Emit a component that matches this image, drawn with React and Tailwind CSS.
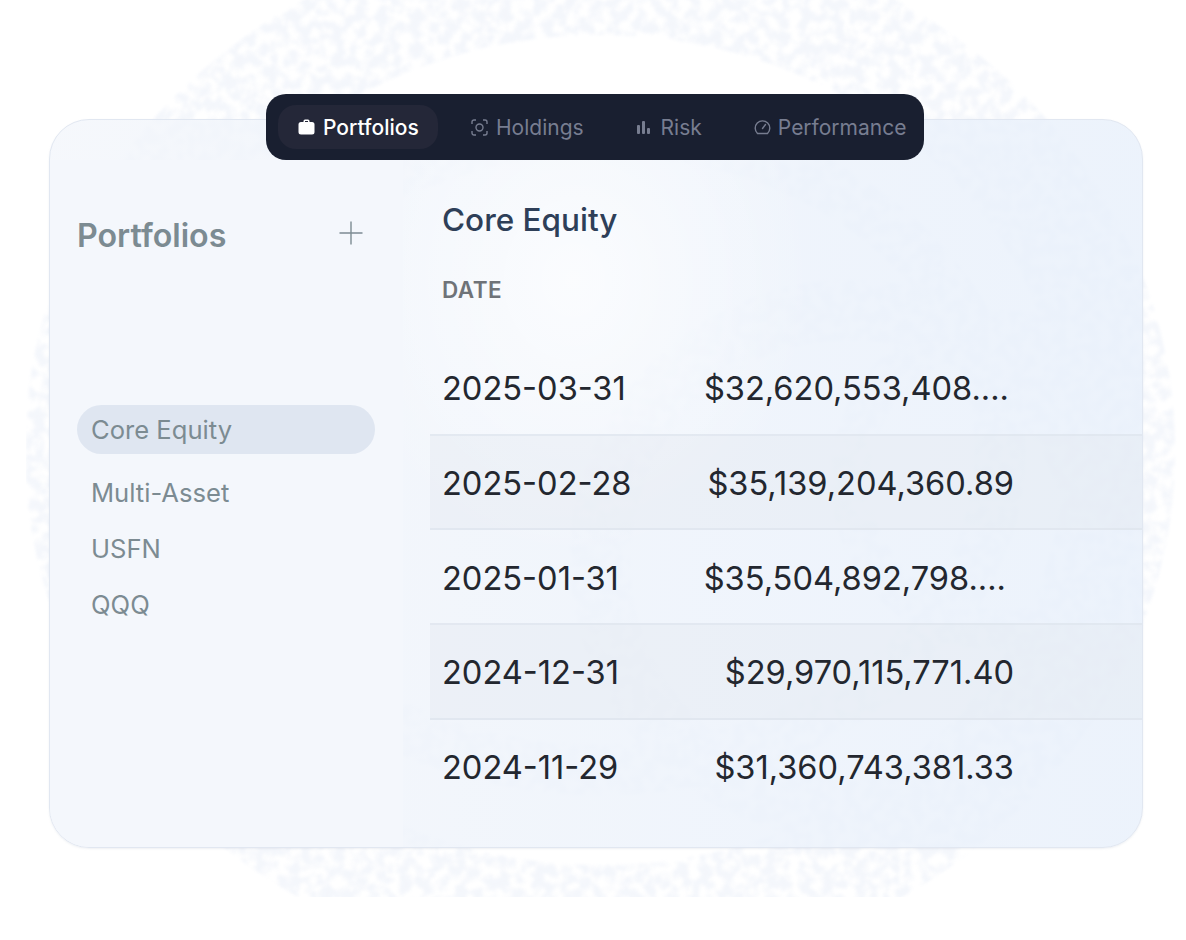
const rows = [
  { d: '2025-03-31', v: '$32,620,553,408....', alt: false, pr: 'pr-[133px]' },
  { d: '2025-02-28', v: '$35,139,204,360.89', alt: true, pr: 'pr-[128px]' },
  { d: '2025-01-31', v: '$35,504,892,798....', alt: false, pr: 'pr-[136px]' },
  { d: '2024-12-31', v: '$29,970,115,771.40', alt: true, pr: 'pr-[128px]' },
  { d: '2024-11-29', v: '$31,360,743,381.33', alt: false, pr: 'pr-[128px]' },
];

function Backdrop() {
  return (
    <svg className="absolute left-0 top-0" width="1186" height="897" viewBox="0 0 1186 897">
      <defs>
        <filter id="speck" x="-5%" y="-5%" width="110%" height="110%">
          <feTurbulence type="fractalNoise" baseFrequency="0.09" numOctaves="3" seed="7" result="n" />
          <feColorMatrix in="n" type="matrix" values="0 0 0 0 0.78  0 0 0 0 0.83  0 0 0 0 0.93  0 0 0 4 -1.5" result="c" />
          <feComposite in="c" in2="SourceGraphic" operator="in" />
          <feGaussianBlur stdDeviation="1.8" />
        </filter>
      </defs>
      <g filter="url(#speck)" opacity="0.42">
        <ellipse cx="600" cy="450" rx="520" ry="470" fill="none" stroke="#000" strokeWidth="110" />
        <ellipse cx="600" cy="450" rx="400" ry="320" fill="none" stroke="#000" strokeWidth="50" />
        <circle cx="850" cy="560" r="250" fill="none" stroke="#000" strokeWidth="60" />
        <circle cx="1000" cy="480" r="150" fill="none" stroke="#000" strokeWidth="40" />
      </g>
    </svg>
  );
}

export default function App() {
  return (
    <div className="relative h-[940px] w-[1186px] overflow-hidden bg-white font-['Inter',sans-serif]">
      <Backdrop />
      <div className="relative pl-[49px] pr-[43px] pt-[119px]">
        <div className="h-[729px] overflow-hidden rounded-[40px] border border-[#e1e7f1] bg-[linear-gradient(90deg,rgba(243,246,251,0.8),rgba(232,240,251,0.82))] shadow-[0_1px_2px_rgba(148,163,184,0.15)]">
          <div className="h-[40px]" />
          <div className="flex h-[688px]">
            <aside className="w-[353px] shrink-0 bg-[#f4f7fc] pl-[27px] pr-[28px] pt-[52px]">
              <div className="flex items-center justify-between pr-[11px]">
                <h2 className="text-[32.2px] font-semibold leading-[48px] text-[#7c8b92]">Portfolios</h2>
                <svg className="mb-[6px]" width="26" height="26" viewBox="0 0 26 26" fill="none" stroke="#7c8b92" strokeWidth="1.4">
                  <path d="M13 1.500V24.500M1.500 13H24.500" />
                </svg>
              </div>
              <ul className="mt-[145px] text-[25.6px] leading-[40px] text-[#7c8b92]">
                <li className="mb-[19px] flex h-[49px] items-center rounded-full bg-[#dfe6f1] px-[14px]">Core Equity</li>
                <li className="mb-[16px] px-[14px]">Multi-Asset</li>
                <li className="mb-[16px] px-[14px]">USFN</li>
                <li className="px-[14px]">QQQ</li>
              </ul>
            </aside>
            <main className="relative flex-1 bg-[radial-gradient(ellipse_240px_280px_at_170px_120px,rgba(255,255,255,0.7),rgba(255,255,255,0)_100%)]">
              <h1 className="pl-[39px] pt-[38px] text-[31.5px] font-medium leading-[44px] text-[#2e3f58]">Core Equity</h1>
              <div className="pl-[39px] pt-[34px] text-[22.500px] font-semibold leading-[28px] tracking-[0.02em] text-[#6f7378]">DATE</div>
              <div className="mt-[37px]">
                {rows.map((r) => (
                  <div
                    key={r.d}
                    className={`ml-[27px] flex h-[94.700px] items-center justify-between border-b-2 border-[#dfe5ee]/80 pl-[12px] pt-[3px] text-[32.6px] text-[#23272f] ${r.alt ? 'bg-[#e3e8ef]/40' : ''} ${r.d === '2024-11-29' ? 'border-transparent' : ''} ${r.pr}`}
                  >
                    <span>{r.d}</span>
                    <span>{r.v}</span>
                  </div>
                ))}
              </div>
            </main>
          </div>
        </div>
      </div>
      <nav className="absolute left-[266px] top-[94px] flex h-[66px] w-[658px] items-center rounded-[20px] bg-[#191f30] pl-[12px] text-[21px] leading-none">
        <div className="flex h-[44px] w-[160px] items-center gap-[8px] rounded-[18px] bg-[#242738] pl-[20px] font-medium text-white">
          <svg width="17" height="16" viewBox="0 0 17 16" fill="#fff"><path d="M5.500 3V2a1.500 1.500 0 0 1 1.500-1.500h3A1.500 1.500 0 0 1 11.500 2v1H14a2.500 2.500 0 0 1 2.500 2.500v7.500a2.500 2.500 0 0 1-2.500 2.500H3A2.500 2.500 0 0 1 .5 13V5.500A2.500 2.500 0 0 1 3 3Zm1.500 0h3V2H7Z" fillRule="evenodd" /></svg>
          Portfolios
        </div>
        <div className="ml-[33px] flex items-center gap-[8px] text-[#777d90]">
          <svg width="17" height="17" viewBox="0 0 17 17" fill="none" stroke="#777d90" strokeWidth="1.4"><path d="M1 5V3a2 2 0 0 1 2-2h2M12 1h2a2 2 0 0 1 2 2v2M16 12v2a2 2 0 0 1-2 2h-2M5 16H3a2 2 0 0 1-2-2v-2" /><circle cx="8.500" cy="8.500" r="3.500" /></svg>
          Holdings
        </div>
        <div className="ml-[51px] flex items-center gap-[10px] text-[#777d90]">
          <svg width="16" height="16" viewBox="0 0 16 16" fill="#777d90"><rect x="2" y="6" width="3" height="9" rx="1" /><rect x="7" y="2" width="3" height="13" rx="1" /><rect x="12" y="9" width="3" height="6" rx="1" /></svg>
          Risk
        </div>
        <div className="ml-[52px] flex items-center gap-[7px] text-[#777d90]">
          <svg width="17" height="16" viewBox="0 0 17 16" fill="none" stroke="#777d90" strokeWidth="1.400" strokeLinecap="round"><path d="M3.500 14.500a7.300 7.300 0 1 1 10 0Z" /><path d="M8.500 9.500 11.500 5.500" /></svg>
          Performance
        </div>
      </nav>
    </div>
  );
}
